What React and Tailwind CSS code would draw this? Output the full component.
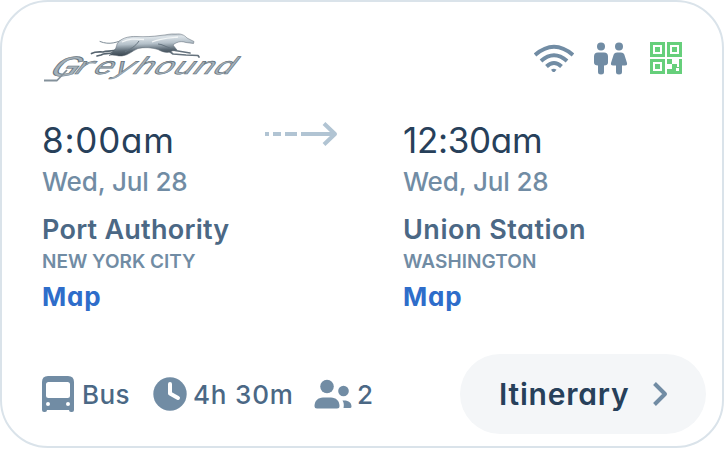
import React from "react";

function GreyhoundLogo() {
  return (
    <svg width="204" height="58" viewBox="40 30 204 58" className="block overflow-visible" aria-label="Greyhound">
      <defs>
        <linearGradient id="dog" x1="0" y1="0" x2="0.15" y2="1">
          <stop offset="0" stopColor="#7c8993" />
          <stop offset="0.22" stopColor="#dde4e9" />
          <stop offset="0.5" stopColor="#b4c0c9" />
          <stop offset="0.78" stopColor="#5b6974" />
          <stop offset="1" stopColor="#39454f" />
        </linearGradient>
      </defs>
      <g strokeLinecap="round" strokeLinejoin="round" fill="none">
        <path d="M124 39.500C117 42 110 45.500 100 41.500" stroke="#7f8d97" strokeWidth="1" />
        <path d="M118 49C112 52 108 50.500 103 52C98 52 95 51.500 91.500 53.500M114 52C108 55 105 52.500 101 55L97 56" stroke="#56646f" strokeWidth="1.7" />
        <path d="M167 46L175 50.500L184 52L190 53M165 48L173 54L186 55L198 55.500L199 57" stroke="#65727d" strokeWidth="1.7" />
      </g>
      <path
        d="M117 44C120 38.500 128 36 137 36.500C145 37 153 36.500 160 35.500C166 35 170 33.500 176 34C180 33.500 184 34.500 187 38L194 41.500L193.500 43.500L186 42.500C180 40.500 176 42.500 173 45L177 50L172 51C169 53.500 163 52.500 158 49.500C152 47.500 144 47 138 48.500C132 51 129 55 122 56C118 56.500 113 54 109 55.500C114 52 116 49 117 44Z"
        fill="url(#dog)" stroke="#5c6974" strokeWidth=".5"
      />
      <path d="M122 42C130 38 136 39 144 39.500M152 42C159 38.500 168 38 178 37" fill="none" stroke="#f3f6f7" strokeWidth="1.3" />
      <path d="M139 41C135 47 130 49 125 52M158 44C162 44 166 47 170 48" fill="none" stroke="#667580" strokeWidth="1" />
      <g fontFamily="'Liberation Mono', monospace" fill="#a3b0b9" stroke="#65727c" strokeWidth=".6">
        <text transform="matrix(1 0 -0.8 1 46 75.500)" fontSize="29" textLength="28" lengthAdjust="spacingAndGlyphs">G</text>
        <text transform="matrix(1 0 -0.8 1 70 74)" fontSize="24" textLength="160" lengthAdjust="spacingAndGlyphs">reyhound</text>
      </g>
      <path d="M67 70L57 80.500H44" fill="none" stroke="#84919b" strokeWidth="1.8" strokeLinejoin="round" />
    </svg>
  );
}

function WifiIcon() {
  return (
    <svg width="40" height="28" viewBox="534 43 40 28" fill="none" stroke="#718ca4" strokeWidth="4">
      <path d="M535 54Q554 37.500 573 54M541 60Q554 48.500 567 60M546.500 65.500Q554 58.500 561.500 65.500" />
      <path d="M551 68.800Q553.700 66.800 556.500 68.800L553.700 72Z" fill="#718ca4" stroke="none" />
    </svg>
  );
}

function RestroomIcon() {
  return (
    <svg width="34" height="33" viewBox="594 41.500 34 33" fill="#718ca4">
      <circle cx="601" cy="46" r="4" />
      <circle cx="619" cy="46" r="4" />
      <path d="M598 52H604Q608 52 608 56V62Q608 65 604 65V71.500Q604 74 601 74Q598 74 598 71.500V65Q594 65 594 62V56Q594 52 598 52Z" />
      <path d="M617 52H621Q623.500 52 624.300 54L627 62.500Q627.500 65 625 65H622V71.500Q622 74 619 74Q616 74 616 71.500V65H613Q610.500 65 611 62.500L613.700 54Q614.500 52 617 52Z" />
    </svg>
  );
}

function QrIcon() {
  return (
    <svg width="32" height="32" viewBox="0 0 32 32" fill="#66cf7b" shapeRendering="crispEdges">
      <path fillRule="evenodd" d="M0 0H15V15H0ZM3 3V12H12V3ZM17 0H32V15H17ZM20 3V12H29V3ZM0 17H15V32H0ZM3 20V29H12V20Z" />
      <path d="M5 5H10V10H5ZM22 5H27V10H22ZM5 22H10V27H5ZM17 17H22V22H17ZM29 17H32V32H17V27H22V22H27V25H29Z" />
      <path d="M26 26H29V29H26Z" fill="white" />
    </svg>
  );
}

function RouteArrow() {
  return (
    <svg width="74" height="26" viewBox="0 0 74 26" fill="none" stroke="#b1c4d3" strokeWidth="4">
      <path d="M1 13H5M9 13H17M21 13H33M37 13H71M60 2.500L71 13L60 23.500" strokeLinejoin="round" />
    </svg>
  );
}

function BusIcon() {
  return (
    <svg width="32" height="36" viewBox="0 0 32 36" fill="#718ca4">
      <path fillRule="evenodd" d="M6 0H26Q32 0 32 6V34Q32 36 30 36H29Q27 36 27 34H5Q5 36 3 36H2Q0 36 0 34V6Q0 0 6 0ZM6.500 6Q4 6 4 8.500V19.500Q4 22 6.500 22H25.500Q28 22 28 19.500V8.500Q28 6 25.500 6ZM6 26A2 2 0 1 0 6 30A2 2 0 1 0 6 26ZM26 26A2 2 0 1 0 26 30A2 2 0 1 0 26 26Z" />
    </svg>
  );
}

function ClockIcon() {
  return (
    <svg width="34" height="34" viewBox="0 0 34 34">
      <circle cx="17" cy="17" r="16.700" fill="#718ca4" />
      <path d="M17 7V16.500L25 21" fill="none" stroke="white" strokeWidth="4" strokeLinecap="round" strokeLinejoin="round" />
    </svg>
  );
}

function PeopleIcon() {
  return (
    <svg width="38" height="30" viewBox="0 0 38 30" fill="#718ca4">
      <circle cx="13" cy="7.500" r="6.800" />
      <circle cx="29.500" cy="12" r="5.300" />
      <path d="M9 18.500H17C22 18.500 25.500 22 25.500 27Q25.500 29.500 23 29.500H3Q.5 29.500 .5 27C.5 22 4 18.500 9 18.500Z" />
      <path d="M28.500 21.500H30C35 21.500 37.500 24 37.500 27.500Q37.500 29 36 29H29.500C30 26 30 24 28.500 21.500Z" />
    </svg>
  );
}

function Stop({ time, timeClass, place, placeClass, city, cityClass }) {
  return (
    <div className="flex flex-col items-start whitespace-nowrap">
      <div className={"h-[41px] text-[35px] font-normal leading-[41px] text-[#27405a] " + timeClass}>{time}</div>
      <div className="h-[41px] text-[26px] font-medium leading-[41px] tracking-[-0.15px] text-[#718ca4]">Wed, Jul 28</div>
      <div className={"mt-[7px] h-[41px] text-[27px] font-semibold leading-[41px] text-[#4b6885] " + placeClass}>{place}</div>
      <div className={"h-[23px] text-[19px] font-semibold leading-[23px] text-[#718ca4] " + cityClass}>{city}</div>
      <a className="mt-[3px] h-[42px] text-[26px] font-bold leading-[42px] tracking-[0.8px] text-[#2e6dca]">Map</a>
    </div>
  );
}

export default function App() {
  return (
    <div className="h-[449px] w-[725px] overflow-hidden bg-white font-['Inter',sans-serif] [font-feature-settings:'cv11']">
      <div className="flex h-[448px] w-[724px] flex-col rounded-[48px] border-2 border-[#dae3ea] bg-white">
        <header className="flex h-[118px] items-start justify-between pl-[38px] pr-10 pt-7">
          <GreyhoundLogo />
          <div className="flex items-center gap-5 pt-[11.5px]">
            <WifiIcon />
            <RestroomIcon />
            <div className="ml-0.5"><QrIcon /></div>
          </div>
        </header>
        <main className="flex pl-10">
          <div className="w-[222px]">
            <Stop time="8:00am" timeClass="tracking-[0.8px]" place="Port Authority" placeClass="tracking-[0.25px]" city="NEW YORK CITY" cityClass="tracking-[0px]" />
          </div>
          <div className="w-[139px] pt-[1px]"><RouteArrow /></div>
          <Stop time="12:30am" timeClass="tracking-[-0.3px]" place="Union Station" placeClass="tracking-[0.5px]" city="WASHINGTON" cityClass="tracking-[0.1px]" />
        </main>
        <footer className="mt-9 flex items-center pl-10 text-[26px] font-medium text-[#4b6885]">
          <div className="flex w-[111px] items-center gap-2"><BusIcon /><span className="tracking-[0.4px]">Bus</span></div>
          <div className="flex w-[161px] items-center gap-[6px] whitespace-nowrap"><ClockIcon /><span className="tracking-[0.8px]">4h 30m</span></div>
          <div className="flex w-[146px] items-center gap-[5px]"><PeopleIcon /><span>2</span></div>
          <button className="flex h-20 w-[246px] items-center justify-between rounded-full bg-[#f4f6f8] pl-[39px] pr-[38px] text-[30px] font-semibold text-[#27405a]">
            <span className="tracking-[0.8px]">Itinerary</span>
            <svg width="15" height="26" viewBox="0 0 15 26" fill="none" stroke="#718ca4" strokeWidth="4"><path d="M1.500 2.500L12 13L1.500 23.500" strokeLinejoin="round" /></svg>
          </button>
        </footer>
      </div>
    </div>
  );
}
